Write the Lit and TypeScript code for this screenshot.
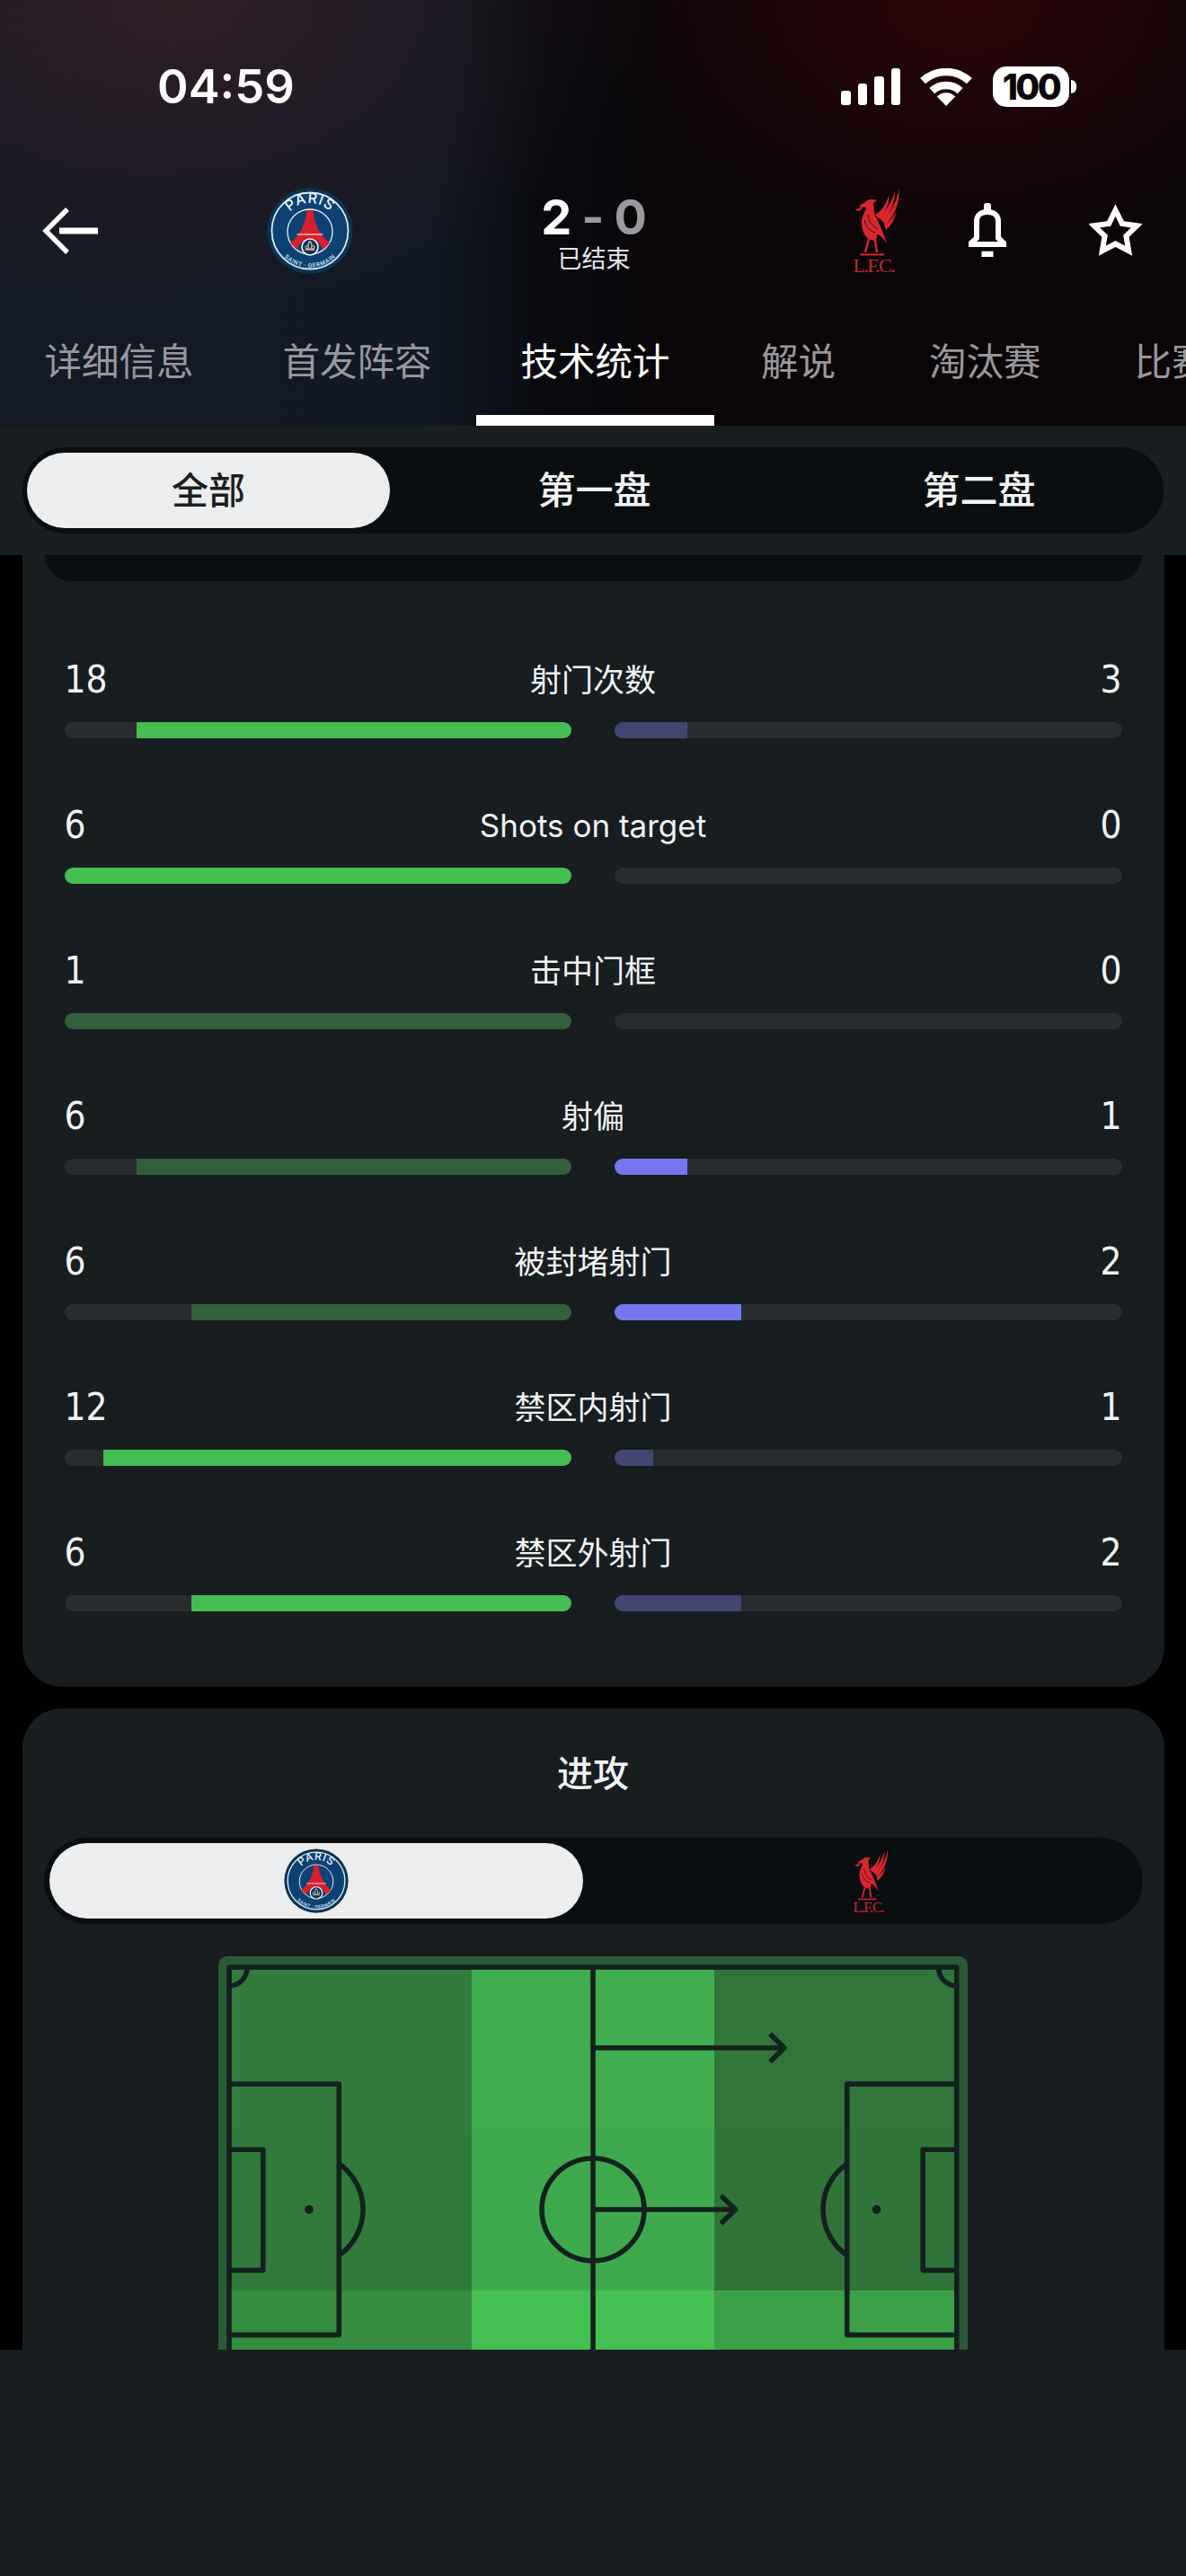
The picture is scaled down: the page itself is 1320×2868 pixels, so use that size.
import { LitElement, html, css, svg } from 'lit';
import { customElement } from 'lit/decorators.js';

type Stat = { label: string; a: number; b: number; aBright: boolean; bBright: boolean };

const stats: Stat[] = [
  { label: '射门次数', a: 18, b: 3, aBright: true, bBright: false },
  { label: 'Shots on target', a: 6, b: 0, aBright: true, bBright: false },
  { label: '击中门框', a: 1, b: 0, aBright: false, bBright: false },
  { label: '射偏', a: 6, b: 1, aBright: false, bBright: true },
  { label: '被封堵射门', a: 6, b: 2, aBright: false, bBright: true },
  { label: '禁区内射门', a: 12, b: 1, aBright: true, bBright: false },
  { label: '禁区外射门', a: 6, b: 2, aBright: true, bBright: false }
];

const tabs = ['详细信息', '首发阵容', '技术统计', '解说', '淘汰赛', '比赛'];

// both crests are shared between the header and the team switch
const psgLogo = (size: number) => html`
  <svg class="crest" width=${size} height=${size} viewBox="-48 -48 96 96">
    <defs>
      <path id="psgTop" d="M-31 0A31 31 0 0 1 31 0" />
      <path id="psgBottom" d="M-39 0A39 39 0 0 0 39 0" />
    </defs>
    <circle r="47.5" fill="#0b3450" />
    <circle r="42.5" fill="#0e4173" stroke="#d5ecf6" stroke-width="1.8" />
    <circle cy="1" r="25" fill="none" stroke="#e8f0f4" stroke-width="1.3" />
    <path d="M-3.5 -23H3.5C4 -10 11 6 22 13.5C20 16 17 18.5 14 20.5C12 14 7 9.5 0 9.5C-7 9.5 -12 14 -14 20.5C-17 18.5 -20 16 -22 13.5C-11 6 -4 -10 -3.5 -23Z" fill="#d8202c" />
    <path d="M-14.5 4H14.5" stroke="#f1e9e9" stroke-width="1.2" />
    <circle cy="18" r="9" fill="#0e3560" stroke="#f2f2f2" stroke-width="1.6" />
    <path d="M0 11.5C2.5 14 2.5 17 1 20H4.5C5.5 18 4 16 3 17M0 11.5C-2.5 14 -2.5 17 -1 20H-4.5C-5.5 18 -4 16 -3 17M-5 21H5" fill="none" stroke="#c9b98a" stroke-width="1.3" />
    <text font-family="Inter, sans-serif" font-weight="500" font-size="16" letter-spacing="1" fill="#eef6fa" text-anchor="middle">
      <textPath href="#psgTop" startOffset="50%">PARIS</textPath>
    </text>
    <text font-family="Inter, sans-serif" font-weight="600" font-size="6.2" letter-spacing="0.5" fill="#cfe6f2" text-anchor="middle">
      <textPath href="#psgBottom" startOffset="50%" dominant-baseline="middle">SAINT · GERMAIN</textPath>
    </text>
  </svg>
`;

const lfcLogo = (w: number, h: number) => html`
  <svg class="crest" width=${w} height=${h} viewBox="0 0 53 96">
    <g fill="#d9272e">
      <path d="M7 22C9 19 11 17 13 17C16 13 21 12 27 14L23 17C24 22 23 28 26 33C30 40 34 50 38 62C33 55 30 52 27 52C28 58 24 60 20 58C14 56 10 48 10 38C10 31 14 27 15 22C12 21 10 22 7 22Z" />
      <path d="M25 30C32 26 37 19 40 9C41 17 37 27 29 35Z" />
      <path d="M29 32C37 27 43 17 47 4C47 16 43 27 33 38Z" />
      <path d="M33 36C41 30 48 18 52 1C52 17 47 31 36 42Z" />
      <path d="M35 42C41 38 45 33 48 27C47 35 43 42 37 47Z" />
      <path d="M6 26L3 24L7 23L11 22L9 25Z" />
    </g>
    <g stroke="#d9272e" fill="none">
      <path d="M18 57L14 72M25 58L27 72" stroke-width="2.4" />
      <path d="M8 74.5H22M21 74.5H35" stroke-width="1.8" />
    </g>
    <path d="M13 36C15 44 19 48 25 50M17 30C18 38 22 43 28 46" stroke="#1a0508" stroke-width="0.9" fill="none" />
    <text x="0.5" y="94" font-family="'Liberation Serif', serif" font-size="22" letter-spacing="-1.6" fill="#c4252c">L.F.C.</text>
  </svg>
`;

const pitch = svg`
  <rect x="243" y="2178" width="834" height="460" rx="10" fill="#2a5a38" />
  <rect x="257.6" y="2193" width="267.2" height="177" fill="#337b3d" />
  <rect x="257.6" y="2370" width="267.2" height="180" fill="#317a3b" />
  <rect x="257.6" y="2550" width="267.2" height="70" fill="#368c41" />
  <rect x="524.8" y="2193" width="270.2" height="177" fill="#40ae4e" />
  <rect x="524.8" y="2370" width="270.2" height="180" fill="#3ea94c" />
  <rect x="524.8" y="2550" width="270.2" height="70" fill="#44c052" />
  <rect x="795" y="2193" width="267" height="177" fill="#31753a" />
  <rect x="795" y="2370" width="267" height="180" fill="#30743a" />
  <rect x="795" y="2550" width="267" height="70" fill="#3ca048" />
  <g fill="none" stroke="#13211e" stroke-width="5.6" stroke-linejoin="round">
    <path d="M255 2640V2190.3H1064.8V2640" />
    <path d="M660 2190V2620" />
    <circle cx="660" cy="2460" r="57" />
    <path d="M255 2320.3H377.3V2599.6H255" />
    <path d="M255 2393.3H292.8V2527.6H255" />
    <path d="M377.3 2409A62 62 0 0 1 377.3 2511" />
    <path d="M1064.8 2320.3H942.7V2599.6H1064.8" />
    <path d="M1064.8 2393.3H1027.2V2527.6H1064.8" />
    <path d="M942.7 2409A62 62 0 0 0 942.7 2511" />
    <path d="M255 2211A20 20 0 0 0 275 2191" />
    <path d="M1064.8 2211A20 20 0 0 1 1044.8 2191" />
    <path d="M660 2280H870M857 2264.5L873 2280L857 2295.5" />
    <path d="M660 2460H816M802.5 2444.5L818.5 2460L802.5 2475.5" />
  </g>
  <ellipse cx="344" cy="2460" rx="4.8" ry="5" fill="#13211e" />
  <ellipse cx="975.5" cy="2460" rx="4.8" ry="5" fill="#13211e" />
`;

@customElement('app-root')
export class AppRoot extends LitElement {
  static styles = css`
    :host {
      display: block;
      width: 1320px;
      height: 2868px;
      background: #000;
      font-family: Inter, 'Noto Sans CJK SC', sans-serif;
      color: #f1f3f5;
      overflow: hidden;
    }

    .page {
      height: 2868px;
      display: flex;
      flex-direction: column;
    }

    .crest {
      display: block;
      flex: none;
      overflow: visible;
    }

    /* header */
    .header {
      height: 474px;
      flex: none;
      background:
        radial-gradient(400px 280px at 1072px 0, #2a0508 0%, rgba(42, 5, 8, 0) 100%),
        radial-gradient(520px 340px at 200px 0, rgba(60, 30, 38, 0.7) 0%, rgba(60, 30, 38, 0) 100%),
        linear-gradient(90deg, #141a25 0%, #111925 36%, #090a0f 46%, #0b0508 58%, #0b0508 100%);
    }

    .status {
      display: flex;
      align-items: center;
      height: 45px;
      padding: 74px 122px 0 175px;
    }

    .time {
      font-size: 52.5px;
      font-weight: 600;
      line-height: 45px;
      color: #fff;
    }

    .status-icons {
      margin-left: auto;
      display: flex;
      align-items: center;
    }

    .signal {
      display: flex;
      align-items: flex-end;
      gap: 8px;
      height: 41px;
      margin-right: 22px;
    }

    .signal i {
      display: block;
      width: 10.5px;
      background: #fff;
      border-radius: 3px;
    }

    .battery {
      width: 85px;
      height: 45px;
      margin-left: 23px;
      border-radius: 15px;
      background: #fff;
      color: #0a0608;
      font-size: 39px;
      font-weight: 800;
      letter-spacing: -2.5px;
      line-height: 45px;
      text-align: center;
    }

    .nub {
      width: 6px;
      height: 15px;
      margin-left: 2px;
      background: #fff;
      border-radius: 0 8px 8px 0;
    }

    .match {
      display: flex;
      align-items: center;
      height: 96px;
      margin-top: 90px;
      padding-left: 47px;
    }

    .back {
      width: 62px;
      height: 52px;
      margin-right: 188px;
    }

    .score {
      width: 214px;
      padding-top: 6px;
      margin-inline: 161px 181px;
      text-align: center;
    }

    .digits {
      display: flex;
      justify-content: center;
      gap: 11px;
      height: 54px;
      font-size: 54px;
      font-weight: 700;
      line-height: 54px;
      color: #9a9a9e;
    }

    .digits b {
      color: #fff;
      font-weight: 700;
    }

    .finished {
      margin-top: 4px;
      font-size: 27px;
      line-height: 32px;
      color: #e6e6e8;
    }

    .bell {
      margin-left: 76px;
      margin-top: -2px;
    }

    .star {
      margin-left: 92px;
      margin-top: -2px;
    }

    .tabs {
      display: flex;
      margin-top: 55px;
      height: 114px;
      overflow: hidden;
      white-space: nowrap;
    }

    .tab {
      flex: none;
      height: 114px;
      padding: 12.5px 49.5px 0;
      box-sizing: border-box;
      font-size: 41.5px;
      line-height: 60px;
      color: #98989c;
      border-bottom: 12px solid transparent;
    }

    .tab.active {
      color: #fff;
      border-bottom-color: #fff;
    }

    .tab.late {
      padding: 12.5px 52px 0;
    }

    /* period switch */
    .periods {
      flex: none;
      height: 144px;
      padding: 24px 25px;
      box-sizing: border-box;
      background: #191e21;
    }

    .switch {
      height: 96px;
      border-radius: 48px;
      background: #0b0e10;
      padding: 6px 5px;
      box-sizing: border-box;
      display: grid;
      grid-template-columns: 404px 455px 1fr;
      font-size: 42px;
      font-weight: 500;
      line-height: 84px;
      text-align: center;
    }

    .switch .on {
      background: #ecedef;
      color: #1b1e21;
      border-radius: 42px;
      font-size: 41px;
    }

    /* content */
    .content {
      flex: 1;
      min-height: 0;
      overflow: hidden;
      padding: 0 24.5px;
      display: flex;
      flex-direction: column;
      gap: 24px;
    }

    .card {
      flex: none;
      background: #181d20;
      border-radius: 44px;
    }

    .card.stats {
      border-radius: 0 0 44px 44px;
      padding: 0 47px 84px;
    }

    .sliver {
      height: 29px;
      margin: 0 -22px 86px;
      background: #0b0e10;
      border-radius: 0 0 32px 32px;
    }

    .rows {
      display: flex;
      flex-direction: column;
      gap: 73px;
    }

    .head {
      display: grid;
      grid-template-columns: 1fr auto 1fr;
      height: 48px;
      margin-bottom: 23px;
      font-size: 35px;
      line-height: 48px;
    }

    .num {
      font-family: 'DejaVu Sans', Inter, sans-serif;
      font-stretch: condensed;
      font-size: 42px;
    }

    .num.right {
      text-align: right;
    }

    .bars {
      display: grid;
      grid-template-columns: 1fr 1fr;
      gap: 48px;
    }

    .track {
      display: flex;
      height: 18px;
      border-radius: 9px;
      background: #292d30;
      overflow: hidden;
    }

    .track.left {
      justify-content: flex-end;
    }

    .fill {
      height: 100%;
    }

    .green {
      background: #44be52;
    }

    .green.dim {
      background: #345f3c;
    }

    .purple {
      background: #7577f0;
    }

    .purple.dim {
      background: #414670;
    }

    .card.attack {
      padding: 42.5px 24px 60px;
    }

    .title {
      font-size: 40px;
      font-weight: 500;
      line-height: 60px;
      text-align: center;
      margin-bottom: 41.5px;
    }

    .teams {
      height: 96px;
      border-radius: 48px;
      background: #0b0e10;
      padding: 6px;
      box-sizing: border-box;
      display: grid;
      grid-template-columns: 594px 1fr;
      margin-bottom: 36px;
    }

    .team {
      display: flex;
      align-items: center;
      justify-content: center;
    }

    .team.on {
      background: #ecedef;
      border-radius: 42px;
    }

    .team.lfc {
      padding-left: 24px;
    }

    .pitch {
      display: block;
      margin: 0 auto;
    }

    .bottom {
      flex: none;
      height: 252px;
      background: #181d20;
    }
  `;

  renderRow(s: Stat) {
    const total = s.a + s.b;
    const left = total ? (s.a / total) * 100 : 0;
    const right = total ? (s.b / total) * 100 : 0;
    return html`
      <div class="row">
        <div class="head">
          <span class="num">${s.a}</span>
          <span>${s.label}</span>
          <span class="num right">${s.b}</span>
        </div>
        <div class="bars">
          <div class="track left">
            <div class="fill green ${s.aBright ? '' : 'dim'}" style="width:${left}%"></div>
          </div>
          <div class="track">
            <div class="fill purple ${s.bBright ? '' : 'dim'}" style="width:${right}%"></div>
          </div>
        </div>
      </div>
    `;
  }

  render() {
    return html`
      <div class="page">
        <header class="header">
          <div class="status">
            <span class="time">04:59</span>
            <div class="status-icons">
              <div class="signal">
                <i style="height:16px"></i>
                <i style="height:24px"></i>
                <i style="height:32px"></i>
                <i style="height:41px"></i>
              </div>
              <svg width="58" height="42" viewBox="0 0 57.5 42">
                <g fill="none" stroke="#fff" stroke-width="8.5">
                  <path d="M2.85 14.2A38 38 0 0 1 54.65 14.2" />
                  <path d="M13.05 25.2A23 23 0 0 1 44.45 25.2" />
                </g>
                <path d="M28.75 42L18.5 31.5A14.4 14.4 0 0 1 39 31.5Z" fill="#fff" />
              </svg>
              <div class="battery">100</div>
              <div class="nub"></div>
            </div>
          </div>

          <div class="match">
            <svg class="back" viewBox="0 0 62 52">
              <path d="M28 2L4 26L28 50" fill="none" stroke="#fff" stroke-width="5.5" />
              <path d="M19 26H62" fill="none" stroke="#fff" stroke-width="7" />
            </svg>
            ${psgLogo(96)}
            <div class="score">
              <div class="digits"><b>2</b><span>-</span><span>0</span></div>
              <div class="finished">已结束</div>
            </div>
            ${lfcLogo(53, 96)}
            <svg class="bell" width="42" height="60" viewBox="0 0 42 60">
              <rect x="17" y="0" width="8" height="10" rx="3" fill="#fff" />
              <path d="M9 39V20C9 13.5 14 10 21 10C28 10 33 13.5 33 20V39L39 44.5V46H3V44.5Z" fill="none" stroke="#fff" stroke-width="6" />
              <rect x="14.5" y="53.7" width="13" height="6.3" fill="#fff" />
            </svg>
            <svg class="star" width="59" height="58" viewBox="0 0 59 58">
              <path d="M29.5 7L36.8 21.9L53.3 24.3L41.4 35.9L44.2 52.2L29.5 44.5L14.8 52.2L17.6 35.9L5.7 24.3L22.2 21.9Z" fill="none" stroke="#fff" stroke-width="6" />
            </svg>
          </div>

          <nav class="tabs">
            ${tabs.map(
              (t, i) => html`<div class="tab ${i === 2 ? 'active' : ''} ${i > 2 ? 'late' : ''}">${t}</div>`
            )}
          </nav>
        </header>

        <div class="periods">
          <div class="switch">
            <div class="on">全部</div>
            <div>第一盘</div>
            <div>第二盘</div>
          </div>
        </div>

        <main class="content">
          <section class="card stats">
            <div class="sliver"></div>
            <div class="rows">${stats.map((s) => this.renderRow(s))}</div>
          </section>

          <section class="card attack">
            <div class="title">进攻</div>
            <div class="teams">
              <div class="team on">${psgLogo(72)}</div>
              <div class="team lfc">${lfcLogo(40, 73)}</div>
            </div>
            <svg class="pitch" width="834" height="438" viewBox="243 2178 834 438">${pitch}</svg>
          </section>
        </main>

        <div class="bottom"></div>
      </div>
    `;
  }
}

declare global {
  interface HTMLElementTagNameMap {
    'app-root': AppRoot;
  }
}
